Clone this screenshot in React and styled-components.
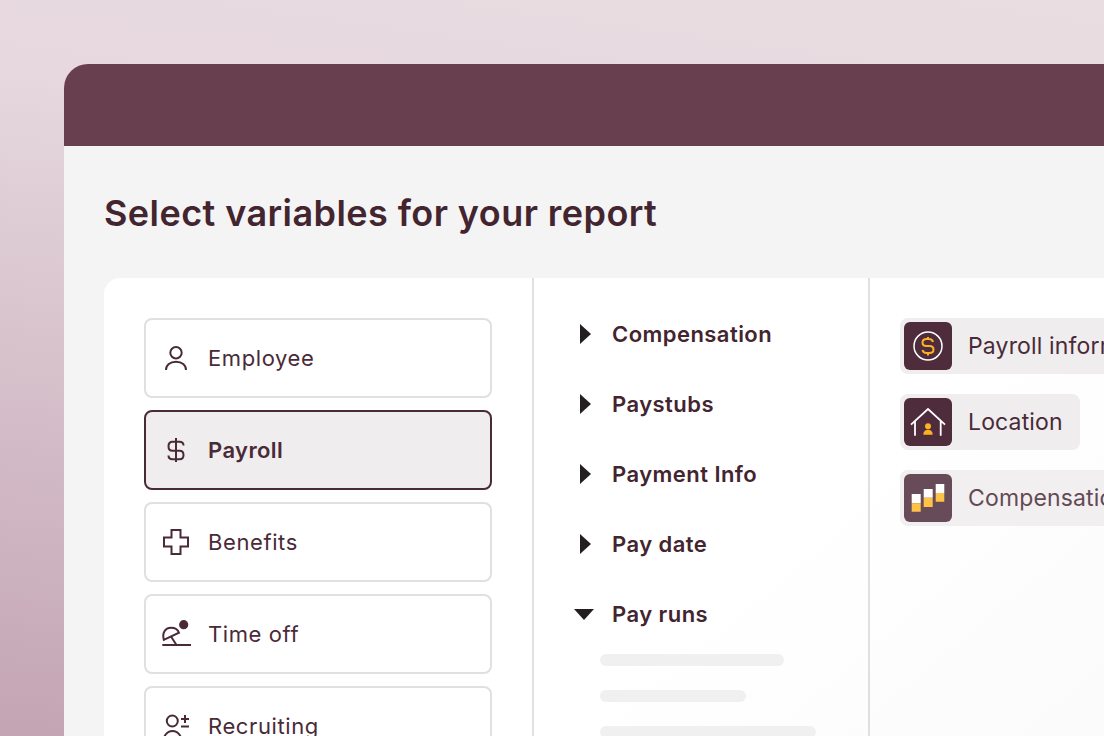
import styled, { createGlobalStyle } from 'styled-components';

const GlobalStyle = createGlobalStyle`
  html, body, #root {
    margin: 0;
    height: 100%;
  }
  body {
    font-family: Inter, "Liberation Sans", sans-serif;
    overflow: hidden;
  }
`;

const Page = styled.div`
  box-sizing: border-box;
  width: 1104px;
  height: 736px;
  padding: 64px 0 0 64px;
  overflow: hidden;
  background: linear-gradient(188deg, #e9dde2 0%, #e6d8de 25%, #c3a4b3 100%);
`;

const Window = styled.div`
  width: 1200px;
  height: 800px;
  background: #f4f4f4;
  border-radius: 24px 24px 0 0;
  overflow: hidden;
`;

const TopBar = styled.div`
  height: 82px;
  background: #683f4f;
`;

const Body = styled.div`
  padding: 44px 40px 0;
`;

const Title = styled.h1`
  margin: 0 0 42px;
  font-size: 36px;
  line-height: 46px;
  font-weight: 600;
  letter-spacing: 0.43px;
  color: #432530;
`;

const Card = styled.div`
  display: grid;
  grid-template-columns: 430px 336px 1fr;
  height: 560px;
  background: linear-gradient(140deg, #fff 55%, #f9f9f9 100%);
  border-radius: 16px 0 0 0;
`;

const CategoryColumn = styled.div`
  display: flex;
  flex-direction: column;
  gap: 12px;
  padding: 40px 40px 0;
  border-right: 2px solid #e0e0e0;
`;

const Category = styled.div`
  box-sizing: border-box;
  display: flex;
  align-items: center;
  gap: 16px;
  height: 80px;
  padding: 0 14px;
  border-radius: 8px;
  border: 2px solid ${(props) => (props.$active ? '#4a2a38' : '#e0e0e0')};
  background: ${(props) => (props.$active ? '#efedee' : '#fff')};
  color: #4a2a38;
  font-size: 22px;
  font-weight: ${(props) => (props.$active ? 600 : 400)};
  letter-spacing: ${(props) => (props.$active ? '0.4px' : '0.6px')};
`;

const IconSlot = styled.svg`
  width: 32px;
  height: 32px;
  flex: none;
  fill: none;
  stroke: #4a2a38;
  stroke-width: 2;
`;

const TreeColumn = styled.div`
  display: flex;
  flex-direction: column;
  padding: 21px 30px 0 40px;
  border-right: 2px solid #e0e0e0;
`;

const TreeRow = styled.div`
  display: flex;
  align-items: center;
  height: 70px;
  font-size: 22px;
  font-weight: 600;
  letter-spacing: 0.45px;
  color: #432530;
`;

const CaretSlot = styled.span`
  display: flex;
  width: 38px;
  flex: none;
`;

const Caret = styled.span`
  width: 0;
  height: 0;
  ${(props) =>
    props.$open
      ? `
    border-left: 10px solid transparent;
    border-right: 10px solid transparent;
    border-top: 11px solid #231f20;
  `
      : `
    margin-left: 6px;
    border-top: 10px solid transparent;
    border-bottom: 10px solid transparent;
    border-left: 11px solid #231f20;
  `}
`;

const Skeletons = styled.div`
  display: flex;
  flex-direction: column;
  gap: 24px;
  margin: 5px 0 0 26px;
`;

const Skeleton = styled.div`
  height: 12px;
  border-radius: 6px;
  background: #f0f0f0;
`;

const FieldColumn = styled.div`
  display: flex;
  flex-direction: column;
  align-items: flex-start;
  gap: 20px;
  padding: 40px 0 0 30px;
`;

const FieldChip = styled.div`
  box-sizing: border-box;
  display: flex;
  align-items: center;
  gap: 16px;
  height: 56px;
  padding: 4px 17px 4px 4px;
  border-radius: 8px;
  background: #efedee;
  color: #4a2a38;
  font-size: 23px;
  letter-spacing: 0.15px;
  white-space: nowrap;
  opacity: ${(props) => (props.$faded ? 0.85 : 1)};
`;

const FieldIcon = styled.svg`
  width: 48px;
  height: 48px;
  flex: none;
  border-radius: 6px;
  background: #4f2c3c;
`;

const PersonIcon = () => (
  <IconSlot viewBox="0 0 32 32">
    <circle cx="16" cy="10.700" r="5.700" />
    <path d="M6 28c0-5 4-8.300 10-8.300s10 3.300 10 8.300" />
  </IconSlot>
);

const DollarIcon = () => (
  <IconSlot viewBox="0 0 32 32">
    <path d="M23.500 11.500c0-2.300-1.500-3.800-4-3.800h-7c-2.500 0-4 2-4 4.500s1.500 4.500 4 4.500h7c2.500 0 4 1.800 4 4.300s-1.500 4.300-4 4.300h-7c-2.500 0-4-1.500-4-3.800M16 4v24" />
  </IconSlot>
);

const CrossIcon = () => (
  <IconSlot viewBox="0 0 32 32">
    <path d="M11.500 4h9v7.500H28v9h-7.500V28h-9v-7.500H4v-9h7.500z" />
  </IconSlot>
);

const BeachIcon = () => (
  <IconSlot viewBox="0 0 32 32">
    <circle cx="23.700" cy="6.700" r="4.600" fill="#4a2a38" stroke="none" />
    <path d="M2.300 27H31" />
    <path d="M3.800 21.800C2 15 5 9.700 11 9.700c4 0 7 2 8 5z" />
    <path d="M11 18.500l5.500 8.500" />
  </IconSlot>
);

const RecruitingIcon = () => (
  <IconSlot viewBox="0 0 32 32">
    <circle cx="12.300" cy="11" r="5.500" />
    <path d="M3 34c0-8 4-13 9.500-13s9.500 5 9.500 13M25 5v8M21 9h8M21 16.500h8" />
  </IconSlot>
);

const PayrollInfoIcon = () => (
  <FieldIcon viewBox="0 0 48 48">
    <circle cx="24" cy="24" r="14" fill="none" stroke="#fff" strokeWidth="1.500" />
    <path
      d="M29 20c-.5-2-2-3-4-3h-2.500c-2.500 0-4 1.500-4 3.500s1.500 3.500 4 3.500h3c2.500 0 4 1.500 4 3.500s-1.500 3.500-4 3.500h-3c-2 0-3.500-1-4-3M24 15v2.500M24 31v2.500"
      fill="none"
      stroke="#fbb124"
      strokeWidth="2"
    />
  </FieldIcon>
);

const LocationIcon = () => (
  <FieldIcon viewBox="0 0 48 48">
    <path
      d="M7 26.700L24 11l17 15.700M11 23v14.700M36.700 23v14.700"
      fill="none"
      stroke="#fff"
      strokeWidth="1.800"
    />
    <circle cx="24" cy="28.300" r="3" fill="#fbb124" />
    <path d="M19.300 36.700c0-3.300 2-5 4.700-5s4.700 1.700 4.700 5z" fill="#fbb124" />
  </FieldIcon>
);

const BarsIcon = () => (
  <FieldIcon viewBox="0 0 48 48">
    <path d="M7.700 20h9v9.300h-9zM19.700 15h9v8.700h-9zM31.700 10h8.600v9h-8.600z" fill="#fff" />
    <path d="M7.700 29.300h9v8.400h-9zM19.700 23.700h9V33h-9zM31.700 19h8.600v8.700h-8.600z" fill="#ffb828" />
  </FieldIcon>
);

const categories = [
  { label: 'Employee', icon: <PersonIcon /> },
  { label: 'Payroll', icon: <DollarIcon />, active: true },
  { label: 'Benefits', icon: <CrossIcon /> },
  { label: 'Time off', icon: <BeachIcon /> },
  { label: 'Recruiting', icon: <RecruitingIcon /> },
];

const treeRows = ['Compensation', 'Paystubs', 'Payment Info', 'Pay date'];

export default function App() {
  return (
    <Page>
      <GlobalStyle />
      <Window>
        <TopBar />
        <Body>
          <Title>Select variables for your report</Title>
          <Card>
            <CategoryColumn>
              {categories.map((item) => (
                <Category key={item.label} $active={item.active}>
                  {item.icon}
                  {item.label}
                </Category>
              ))}
            </CategoryColumn>
            <TreeColumn>
              {treeRows.map((label) => (
                <TreeRow key={label}>
                  <CaretSlot>
                    <Caret />
                  </CaretSlot>
                  {label}
                </TreeRow>
              ))}
              <TreeRow>
                <CaretSlot>
                  <Caret $open />
                </CaretSlot>
                Pay runs
              </TreeRow>
              <Skeletons>
                <Skeleton style={{ width: 184 }} />
                <Skeleton style={{ width: 146 }} />
                <Skeleton style={{ width: 216 }} />
              </Skeletons>
            </TreeColumn>
            <FieldColumn>
              <FieldChip>
                <PayrollInfoIcon />
                Payroll information
              </FieldChip>
              <FieldChip>
                <LocationIcon />
                Location
              </FieldChip>
              <FieldChip $faded>
                <BarsIcon />
                Compensation
              </FieldChip>
            </FieldColumn>
          </Card>
        </Body>
      </Window>
    </Page>
  );
}
